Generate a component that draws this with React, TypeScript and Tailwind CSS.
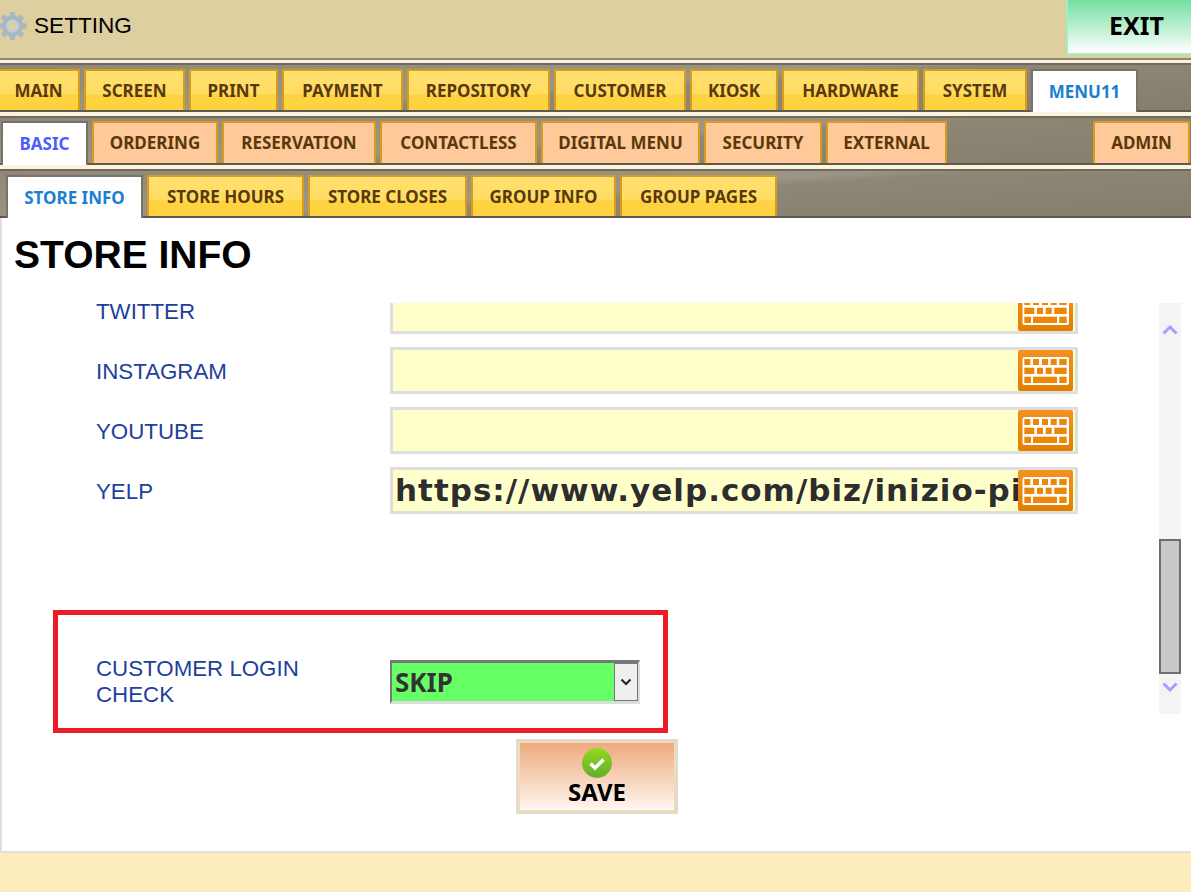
import React from 'react';

const TAB_FONT = "font-['Noto_Sans',sans-serif]";

const YELLOW = 'border-2 border-b-0 border-[#d89b1c] bg-[linear-gradient(#ffe070_0%,#ffdc62_58%,#ffd340_62%,#ffd340_100%)] text-[#59390b]';
const ORANGE = 'border-2 border-b-0 border-[#d89b1c] bg-[#ffc999] text-[#59390b]';
const ACTIVE = 'relative -mb-[2px] border-2 border-b-0 border-[#77736a] bg-white';
const STRIP = 'bg-[linear-gradient(176deg,#8f8877_0%,#9d9686_48%,#8e8775_54%,#857e6c_100%)]';

const MAIN_TABS = [
  { label: 'MAIN', w: 'w-[83px]', cls: YELLOW },
  { label: 'SCREEN', w: 'w-[101px]', cls: YELLOW },
  { label: 'PRINT', w: 'w-[89px]', cls: YELLOW },
  { label: 'PAYMENT', w: 'w-[121px]', cls: YELLOW },
  { label: 'REPOSITORY', w: 'w-[143px]', cls: YELLOW },
  { label: 'CUSTOMER', w: 'w-[132px]', cls: YELLOW },
  { label: 'KIOSK', w: 'w-[88px]', cls: YELLOW },
  { label: 'HARDWARE', w: 'w-[137px]', cls: YELLOW },
  { label: 'SYSTEM', w: 'w-[104px]', cls: YELLOW },
  { label: 'MENU11', w: 'w-[107px]', cls: `${ACTIVE} text-[#1b7fd1]` },
];

const SUB_TABS = [
  { label: 'BASIC', w: 'w-[87px]', cls: `${ACTIVE} text-[#4f5cfb]` },
  { label: 'ORDERING', w: 'w-[126px]', cls: ORANGE },
  { label: 'RESERVATION', w: 'w-[154px]', cls: ORANGE },
  { label: 'CONTACTLESS', w: 'w-[157px]', cls: ORANGE },
  { label: 'DIGITAL MENU', w: 'w-[159px]', cls: ORANGE },
  { label: 'SECURITY', w: 'w-[118px]', cls: ORANGE },
  { label: 'EXTERNAL', w: 'w-[121px]', cls: ORANGE },
];

const PAGE_TABS = [
  { label: 'STORE INFO', w: 'w-[137px]', cls: `${ACTIVE} text-[#1b7fd1]` },
  { label: 'STORE HOURS', w: 'w-[157px]', cls: YELLOW },
  { label: 'STORE CLOSES', w: 'w-[159px]', cls: YELLOW },
  { label: 'GROUP INFO', w: 'w-[145px]', cls: YELLOW },
  { label: 'GROUP PAGES', w: 'w-[157px]', cls: YELLOW },
];

function Tab({ label, w, cls }: { label: string; w: string; cls: string }) {
  return (
    <div className={`${w} ${cls} ${TAB_FONT} shrink-0 flex items-center justify-center text-[17px] font-bold`}>
      {label}
    </div>
  );
}

function GearIcon() {
  const angles = [0, 45, 90, 135, 180, 225, 270, 315];
  return (
    <svg width="28" height="30" viewBox="0 0 28 30" className="shrink-0">
      <g fill="#a9b8c0">
        {angles.map(a => (
          <rect key={a} x="10.8" y="1" width="5.4" height="7" rx="1" transform={`rotate(${a} 13.5 15)`} />
        ))}
        <circle cx="13.5" cy="15" r="10.5" />
      </g>
      <circle cx="13.5" cy="15" r="6.5" fill="#c5cfd3" />
      <circle cx="13.5" cy="15" r="3.6" fill="#ddcf9f" />
    </svg>
  );
}

function KeyboardIcon() {
  const keys = [
    [6.3, 9, 6, 6], [15, 9, 6, 6], [24, 9, 6, 6], [32.7, 9, 6, 6], [41.3, 9, 7.4, 6],
    [6.3, 17.7, 10, 6.3], [19, 17.7, 6, 6.3], [27.7, 17.7, 6, 6.3], [36.3, 17.7, 12.4, 6.3],
    [6.3, 26.7, 6.7, 6.3], [15, 26.7, 24, 6.3], [41.3, 26.7, 7.4, 6.3],
  ];
  return (
    <svg width="55" height="41" viewBox="0 0 55 41" className="block">
      <defs>
        <linearGradient id="kb" x1="0" y1="0" x2="0" y2="1">
          <stop offset="0" stopColor="#f59120" />
          <stop offset="1" stopColor="#e07f00" />
        </linearGradient>
      </defs>
      <rect width="55" height="41" rx="2" fill="url(#kb)" />
      <rect x="4.5" y="7" width="46.5" height="28" rx="2" fill="#fff" />
      {keys.map(([x, y, w, h]) => (
        <rect key={`${x}-${y}`} x={x} y={y} width={w} height={h} fill="#ec8708" />
      ))}
    </svg>
  );
}

function FieldRow({ label, value }: { label: string; value?: string }) {
  return (
    <div className="flex items-center h-[47px] mb-[13px]">
      <div className="w-[390px] pl-[96px] pt-[3px] shrink-0 whitespace-nowrap text-[22.3px] text-[#1e409c] font-['Liberation_Sans',sans-serif]">
        {label}
      </div>
      <div className="relative w-[688px] h-[47px] border-[3px] border-[#dedede] bg-[#ffffcc] overflow-hidden">
        <div className="pl-[2px] w-[625px] overflow-hidden whitespace-nowrap leading-[41px] text-[31px] tracking-[1px] font-bold text-[#2d2d2d] font-['DejaVu_Sans',sans-serif]">
          {value}
        </div>
        <div className="absolute right-[2px] top-0">
          <KeyboardIcon />
        </div>
      </div>
    </div>
  );
}

function Chevron({ up }: { up?: boolean }) {
  return (
    <svg width="16" height="11" viewBox="0 0 16 11" className="block">
      <path d={up ? 'M1.5 9.5 L8 3 L14.5 9.5' : 'M1.5 1.5 L8 8 L14.5 1.5'} fill="none" stroke="#a0a0ff" strokeWidth="3" />
    </svg>
  );
}

export default function App() {
  return (
    <div className="w-[1191px] h-[892px] overflow-hidden flex flex-col bg-[#fdecbe] font-['Liberation_Sans',sans-serif]">
      <div className="h-[58px] shrink-0 flex bg-[#ddcf9f]">
        <div className="flex-1 flex items-center gap-[7px] -ml-[1px] pb-[6px]">
          <GearIcon />
          <span className="text-[22.6px] text-black">SETTING</span>
        </div>
        <div className={`w-[125px] h-[55px] pl-[14px] pb-[2px] border-l-2 border-b-2 border-[#a0efc2] bg-[linear-gradient(#74dfa0,#ffffff)] flex items-center justify-center text-[25px] font-bold text-black ${TAB_FONT}`}>
          EXIT
        </div>
      </div>

      <div className="h-[2px] shrink-0 bg-[#8f8877]" />
      <div className="h-[3px] shrink-0 bg-[#fbf3dc]" />
      <div className={`h-[49px] shrink-0 border-t-2 border-b-2 border-t-[#6f6a5c] border-b-[#5f5a4c] pt-[4px] flex gap-[4px] -ml-[3px] ${STRIP}`}>
        {MAIN_TABS.map(t => <Tab key={t.label} {...t} />)}
      </div>
      <div className="h-[4px] shrink-0 bg-[#fbf3dc]" />
      <div className={`h-[49px] shrink-0 border-t-2 border-b-2 border-t-[#6f6a5c] border-b-[#5f5a4c] pt-[3px] pl-[1px] pr-[1px] flex gap-[4px] ${STRIP}`}>
        {SUB_TABS.map(t => <Tab key={t.label} {...t} />)}
        <div className="flex-1" />
        <Tab label="ADMIN" w="w-[97px]" cls={ORANGE} />
      </div>
      <div className="h-[4px] shrink-0 bg-[#fbf3dc]" />
      <div className={`h-[49px] shrink-0 border-t-2 border-b-2 border-t-[#6f6a5c] border-b-[#5f5a4c] pt-[4px] pl-[6px] flex gap-[4px] ${STRIP}`}>
        {PAGE_TABS.map(t => <Tab key={t.label} {...t} />)}
      </div>

      <div className="relative h-[635px] shrink-0 bg-white border-l-2 border-b-2 border-[#e2e0da] flex flex-col">
        <h1 className="h-[85px] shrink-0 pl-[12px] pt-[10px] text-[39px] leading-[54px] font-bold text-black">STORE INFO</h1>

        <div className="h-[411px] shrink-0 flex">
          <div className="w-[1157px] -ml-[2px] overflow-hidden">
            <div className="-mt-[16px]">
              <FieldRow label="TWITTER" />
              <FieldRow label="INSTAGRAM" />
              <FieldRow label="YOUTUBE" />
              <FieldRow label="YELP" value="https://www.yelp.com/biz/inizio-pizza" />
              <div className="mt-[142px] flex items-center">
                <div className="w-[390px] pl-[96px] shrink-0 text-[22.3px] leading-[26px] text-[#1e409c]">
                  CUSTOMER LOGIN<br />CHECK
                </div>
                <div className="w-[250px] h-[44px] border-t-[3px] border-l-[2px] border-r-[2px] border-b-[3px] border-t-[#777777] border-l-[#777777] border-r-[#dddddd] border-b-[#dddddd] bg-[#66ff66] flex items-center">
                  <span className={`flex-1 pl-[3px] text-[26px] font-bold text-[#333333] ${TAB_FONT}`}>SKIP</span>
                  <div className="w-[24px] h-full border border-[#777777] bg-[#efefef] flex items-center justify-center">
                    <svg width="12" height="8" viewBox="0 0 12 8">
                      <path d="M1.5 1.5 L6 6 L10.5 1.5" fill="none" stroke="#222222" strokeWidth="2" />
                    </svg>
                  </div>
                </div>
              </div>
            </div>
          </div>
          <div className="w-[22px] ml-[2px] shrink-0 bg-[#f4f4f4] flex flex-col items-center">
            <div className="mt-[21px]"><Chevron up /></div>
            <div className="mt-[204px] w-[22px] h-[135px] border-2 border-[#6e6e6e] bg-[#c8c8c8]" />
            <div className="mt-[8px]"><Chevron /></div>
          </div>
        </div>

        <div className="absolute left-[51px] top-[392px] w-[615px] h-[123px] border-[5px] border-[#ed1c24]" />

        <div className="ml-[514px] mt-[25px] w-[162px] h-[75px] border-[3px] border-[#e0dccd] outline outline-1 -outline-offset-4 outline-[#fbdca8] bg-[linear-gradient(#eda97c,#fff8f2)] flex flex-col items-center pt-[6px]">
          <svg width="30" height="30" viewBox="0 0 30 30" className="shrink-0">
            <defs>
              <linearGradient id="ok" x1="0" y1="0" x2="0" y2="1">
                <stop offset="0" stopColor="#93d91c" />
                <stop offset="1" stopColor="#62ad2e" />
              </linearGradient>
            </defs>
            <circle cx="15" cy="15" r="15" fill="url(#ok)" />
            <path d="M8.5 15.5 L13 20 L21.5 11.5" fill="none" stroke="#ffffff" strokeWidth="3.5" />
          </svg>
          <span className={`text-[24px] leading-[27px] font-bold text-black ${TAB_FONT}`}>SAVE</span>
        </div>
      </div>
    </div>
  );
}
